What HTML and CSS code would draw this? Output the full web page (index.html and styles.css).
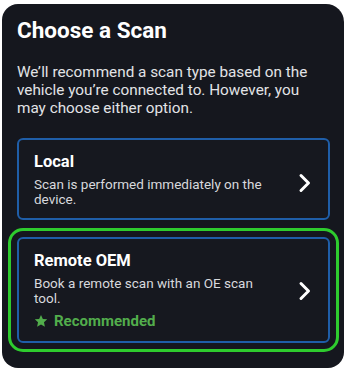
FILE: index.html
```html
<!DOCTYPE html>
<html lang="en">
<head>
    <meta charset="UTF-8">
    <meta name="viewport" content="width=device-width, initial-scale=1.0">
    <title>Choose a Scan</title>
    <link rel="stylesheet" href="styles.css">
</head>
<body>

    <div class="panel">
        <h1>Choose a Scan</h1>
        <p class="intro">We’ll recommend a scan type based on the vehicle you’re connected to. However, you may choose either option.</p>

        <a href="#" class="option">
            <div class="option-text">
                <h2>Local</h2>
                <p>Scan is performed immediately on the device.</p>
            </div>
            <svg class="chevron" width="14" height="20" viewBox="0 0 14 20">
                <path d="M3 2.5 L10.5 10 L3 17.5" fill="none" stroke="#fff" stroke-width="3" stroke-linecap="round" stroke-linejoin="round"/>
            </svg>
        </a>

        <a href="#" class="option recommended">
            <div class="option-text">
                <h2>Remote OEM</h2>
                <p>Book a remote scan with an OE scan tool.</p>
                <div class="badge">
                    <svg width="14" height="14" viewBox="0 0 24 24">
                        <path d="M12 1.5l3.2 6.9 7.5.8-5.6 5.1 1.6 7.4L12 17.9l-6.7 3.8 1.6-7.4L1.3 9.2l7.5-.8z" fill="#52ad4c"/>
                    </svg>
                    Recommended
                </div>
            </div>
            <svg class="chevron" width="14" height="20" viewBox="0 0 14 20">
                <path d="M3 2.5 L10.5 10 L3 17.5" fill="none" stroke="#fff" stroke-width="3" stroke-linecap="round" stroke-linejoin="round"/>
            </svg>
        </a>
    </div>

</body>
</html>
```

FILE: styles.css
```css
/* General styles */
body {
    font-family: Roboto, "Liberation Sans", Arial, sans-serif;
    background-color: #fff;
    margin: 0;
    padding: 0;
}

.panel {
    background-color: #15171e;
    margin: 4px 4px 0 2px;
    width: 342px;
    height: 364px;
    box-sizing: border-box;
    padding: 13px 14px 0 15px;
    border-radius: 16px 18px 16px 16px;
    color: #fff;
}

h1 {
    margin: 0;
    font-size: 22.5px;
    line-height: 27px;
    font-weight: 700;
}

.intro {
    max-width: 298px;
    margin: 19px 0 0;
    font-size: 15.3px;
    line-height: 18px;
    color: #e2e3e6;
}

.option {
    display: flex;
    align-items: center;
    margin-top: 21px;
    border: 2px solid #1f5ea8;
    border-radius: 6px;
    background-color: #16181f;
    padding: 12px 16px 11px 15px;
    color: #fff;
    text-decoration: none;
}

.option-text {
    flex: 1;
    margin-right: 30px;
}

.option h2 {
    margin: 0;
    font-size: 16.5px;
    line-height: 20px;
    font-weight: 700;
}

.option p {
    margin: 5px 0 0;
    font-size: 13.5px;
    line-height: 15px;
    color: #d8d9dd;
}

.chevron {
    flex-shrink: 0;
    margin-top: 6px;
}

.recommended {
    margin-top: 17px;
    padding-bottom: 10px;
    outline: 3px solid #2ecc2e;
    outline-offset: 6px;
}

.recommended .chevron {
    margin-top: 0;
}

.badge {
    display: flex;
    align-items: center;
    gap: 6px;
    margin-top: 5px;
    font-size: 15px;
    line-height: 20px;
    font-weight: 700;
    color: #52ad4c;
}
```
